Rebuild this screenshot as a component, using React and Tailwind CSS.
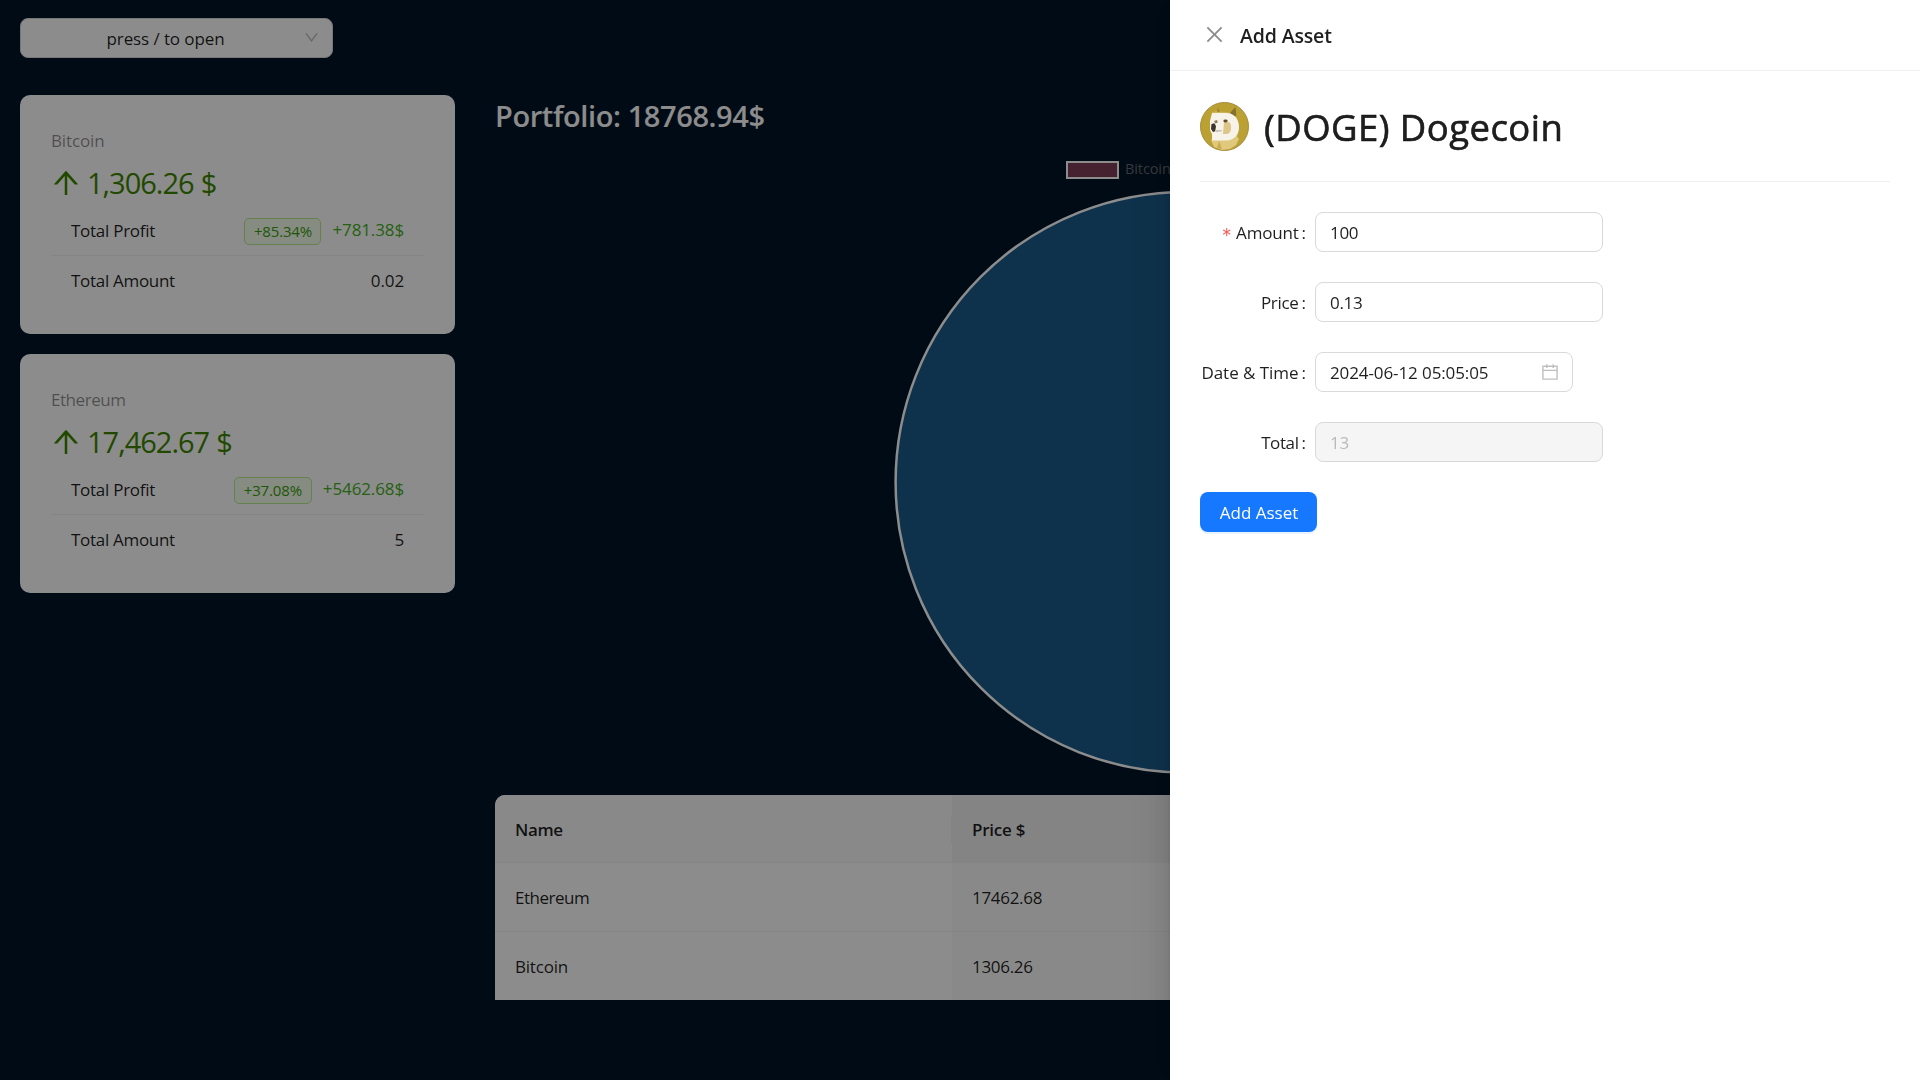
import React from "react";
import {
  AiOutlineArrowUp,
  AiOutlineCalendar,
  AiOutlineClose,
  AiOutlineDown,
} from "react-icons/ai";

const assets = [
  {
    name: "Bitcoin",
    nameClass: "tracking-[-0.14px]",
    value: "1,306.26",
    percent: "+85.34%",
    profit: "+781.38$",
    amount: "0.02",
    tagClass: "w-[77px]",
  },
  {
    name: "Ethereum",
    nameClass: "tracking-[-0.45px]",
    value: "17,462.67",
    percent: "+37.08%",
    profit: "+5462.68$",
    amount: "5",
    tagClass: "w-[78px]",
  },
];

const rows = [
  { name: "Ethereum", price: "17462.68", nameClass: "tracking-[-0.5px]" },
  { name: "Bitcoin", price: "1306.26", nameClass: "tracking-[-0.2px]" },
];

function AssetCard({ asset }) {
  return (
    <section className="h-[239px] w-[435px] rounded-[10px] bg-white px-[31px] pt-[32px]">
      <h2 className={`h-[28px] leading-[28px] text-black/45 ${asset.nameClass}`}>{asset.name}</h2>
      <div className="mt-[4px] flex h-[48px] items-center text-[29px] text-[#3f8600]">
        <AiOutlineArrowUp className="-ml-[2px] size-[34px] shrink-0" />
        <span className="ml-[4px] tracking-[-1px]">{asset.value}</span>
        <span className="ml-[7px]">$</span>
      </div>
      <div className="flex h-[49px] items-center border-b border-[#f0f0f0] px-[20px]">
        <span className="tracking-[-0.27px]">Total Profit</span>
        <span
          className={`mr-[11px] ml-auto flex h-[27px] items-center justify-center rounded-[5px] border border-[#b7eb8f] bg-[#f6ffed] text-[15px] tracking-[-0.16px] text-[#389e0d] ${asset.tagClass}`}
        >
          {asset.percent}
        </span>
        <span className="-mt-[2px] tracking-[-0.12px] text-[#46b01e]">{asset.profit}</span>
      </div>
      <div className="flex h-[49px] items-center justify-between px-[20px]">
        <span className="tracking-[-0.3px]">Total Amount</span>
        <span className="tracking-[-0.11px]">{asset.amount}</span>
      </div>
    </section>
  );
}

function PortfolioChart() {
  return (
    <div className="mt-[14px] h-[642px]">
      <div className="flex h-[30px] items-center pt-[3px] pl-[571px] text-[14.5px] text-[#666]">
        <span className="h-[18px] w-[53px] shrink-0 border-[2.5px] border-white bg-[rgba(255,99,132,0.5)]" />
        <span className="-mt-[2px] ml-[6px] tracking-[-0.1px]">Bitcoin</span>
      </div>
      <svg className="mt-[7px] ml-[399px] block" width="586" height="586" viewBox="0 0 586 586">
        <circle cx="292" cy="292.300" r="290.400" fill="rgba(54,162,235,0.5)" />
        <circle cx="292" cy="292.300" r="290.400" fill="none" stroke="#fff" strokeWidth="2.500" />
      </svg>
    </div>
  );
}

function PriceTable() {
  return (
    <div className="flex h-[205px] flex-col overflow-hidden rounded-t-[10px] bg-white">
      <div className="flex h-[68px] shrink-0 border-b border-[#f0f0f0] bg-[#fafafa] font-semibold">
        <div className="flex w-[457px] items-center justify-between pl-[20px]">
          <span className="mt-[2px] tracking-[-0.4px]">Name</span>
          <span className="h-[28px] w-px bg-[#f0f0f0]" />
        </div>
        <div className="flex flex-1 items-center bg-[#f0f0f0] pt-[2px] pl-[20px] tracking-[-0.25px]">
          Price $
        </div>
      </div>
      {rows.map((row) => (
        <div key={row.name} className="flex h-[69px] shrink-0 border-b border-[#f0f0f0]">
          <div className={`flex w-[457px] items-center pt-[1px] pl-[20px] ${row.nameClass}`}>
            {row.name}
          </div>
          <div className="flex flex-1 items-center bg-[#fafafa] pt-[1px] pl-[20px] tracking-[-0.3px]">
            {row.price}
          </div>
        </div>
      ))}
    </div>
  );
}

function DogeLogo() {
  return (
    <svg className="size-[49px] shrink-0" viewBox="0 0 49 49">
      <circle cx="24.5" cy="24.5" r="24" fill="#bba034" stroke="#a58b3a" strokeWidth="1" />
      <path d="M12 10l5-1 8 1 7 1 5 5 2 9-1 9-5 5-12 4-9-3z" fill="#cdb45a" />
      <path d="M11 38l7-3 16-4 5 6-3 6-6 4-8 1-8-3z" fill="#e0c97c" />
      <path d="M17 46l2-7 3 8z" fill="#c9ad4b" />
      <path d="M30 11l5.500-6 .8 8.500-2.500 1z" fill="#86702d" />
      <path d="M17 10l1-5.500 2 5.500z" fill="#a58636" />
      <path d="M12 11h14c8 0 13 6 13 14 0 8-5 13.500-13 13.500H12V32l-2-4v-9z" fill="#f7f3e8" />
      <path d="M24 20h4c2.500 0 3 3 3 6 0 4-2 6-5 6h-3z" fill="#dcc789" />
      <path d="M11.500 22l3-.8 1.500 3-.8 5-2.200.8-2-3z" fill="#3c352b" />
      <path d="M14 19l3-1 .8 2.500-2.300 1z" fill="#8d7b58" />
      <ellipse cx="25.500" cy="19" rx="2.200" ry="1.400" fill="#5e4b28" />
      <path d="M15 28h7v1.200l-6 1z" fill="#c9c5bb" />
    </svg>
  );
}

function Field({ label, required, labelClass = "", children }) {
  return (
    <div className="flex h-[40px] items-center">
      <div className="flex w-[106px] items-center justify-end pt-[2px] whitespace-nowrap">
        {required && (
          <span className="mt-[4px] mr-[5px] font-['DejaVu_Sans',sans-serif] text-[17px] leading-[20px] text-[#ff4d4f]">
            *
          </span>
        )}
        <span className={labelClass}>{label}</span>
        <span className="ml-[3px]">:</span>
      </div>
      <div className="ml-[9px]">{children}</div>
    </div>
  );
}

const inputBase =
  "flex h-[40px] items-center rounded-[8px] border border-[#d9d9d9] px-[14px] pt-[1px]";

function AddAssetDrawer() {
  return (
    <aside className="fixed inset-y-0 right-0 flex w-[750px] flex-col bg-white shadow-[-7.5px_0_20px_0_rgba(0,0,0,0.08),-3.75px_0_7.5px_-5px_rgba(0,0,0,0.12),-11.25px_0_35px_10px_rgba(0,0,0,0.05)]">
      <header className="flex h-[71px] items-center border-b border-[#f0f0f0] pl-[33px]">
        <AiOutlineClose className="-mt-[1px] size-[23px] text-black/45" />
        <h1 className="mt-[2px] ml-[14px] text-[19.5px] font-semibold tracking-[-0.15px]">
          Add Asset
        </h1>
      </header>
      <div className="px-[30px] pt-[30px]">
        <div className="flex h-[50px] items-center">
          <DogeLogo />
          <h2 className="mt-[2px] ml-[15px] text-[36.5px] tracking-[0.45px] whitespace-nowrap [-webkit-text-stroke:0.6px_currentColor]">
            (DOGE) Dogecoin
          </h2>
        </div>
        <hr className="mt-[30px] border-[#f0f0f0]" />
        <form className="mt-[30px] flex flex-col gap-[30px]">
          <Field label="Amount" required labelClass="tracking-[-0.2px]">
            <div className={`${inputBase} w-[288px]`}>
              <span className="tracking-[-0.3px]">100</span>
            </div>
          </Field>
          <Field label="Price" labelClass="tracking-[-0.31px]">
            <div className={`${inputBase} w-[288px] tracking-[-0.3px]`}>0.13</div>
          </Field>
          <Field label="Date & Time" labelClass="tracking-[-0.04px]">
            <div className={`${inputBase} w-[258px] justify-between`}>
              <span className="tracking-[-0.1px]">2024-06-12 05:05:05</span>
              <AiOutlineCalendar className="-mt-[2px] -mr-[2px] size-[20px] text-black/25" />
            </div>
          </Field>
          <Field label="Total" labelClass="tracking-[-0.4px]">
            <div className={`${inputBase} w-[288px] bg-[#f5f5f5] tracking-[-0.2px] text-black/25`}>
              13
            </div>
          </Field>
          <button
            type="button"
            className="h-[40px] w-[117px] rounded-[8px] bg-[#1677ff] pt-[1px] pl-[1px] text-white shadow-[0_2px_0_rgba(5,145,255,0.1)]"
          >
            Add Asset
          </button>
        </form>
      </div>
    </aside>
  );
}

export default function App() {
  return (
    <div className="h-[1080px] w-[1920px] overflow-hidden bg-[#001529] font-['Open_Sans',sans-serif] text-[17px] text-black/88">
      <header className="flex h-[75px] items-start px-[20px] pt-[18px]">
        <div className="flex h-[40px] w-[313px] items-center rounded-[8px] border border-[#d9d9d9] bg-white px-[12px]">
          <span className="flex-1 pt-[2px] pr-[5px] text-center tracking-[-0.1px]">
            press / to open
          </span>
          <AiOutlineDown className="-mt-[1px] size-[17px] text-black/25" />
        </div>
      </header>
      <div className="flex">
        <aside className="flex w-[475px] flex-col gap-[20px] pt-[20px] pl-[20px]">
          {assets.map((asset) => (
            <AssetCard key={asset.name} asset={asset} />
          ))}
        </aside>
        <main className="w-[1405px] pt-[20px] pl-[20px]">
          <h1 className="h-[44px] text-[29px] leading-[42px] font-semibold tracking-[-0.4px] text-white">
            Portfolio: 18768.94$
          </h1>
          <PortfolioChart />
          <PriceTable />
        </main>
      </div>
      <div className="fixed inset-0 bg-black/45" />
      <AddAssetDrawer />
    </div>
  );
}
